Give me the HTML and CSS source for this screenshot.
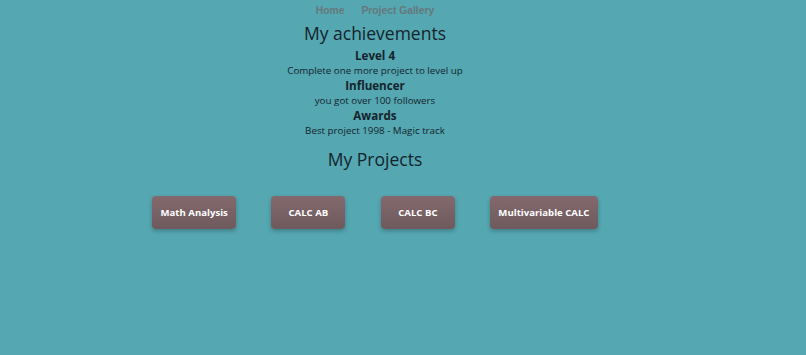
FILE: index.html
```html
<!DOCTYPE html>
<html>
<head>
<meta charset="utf-8">
<link rel="stylesheet" href="styles.css">
</head>
<body>
<div class="page">
  <nav class="nav">
    <a class="nav-link">Home</a>
    <a class="nav-link">Project Gallery</a>
  </nav>
  <h1 class="title">My achievements</h1>
  <div class="achievements">
    <div class="ach-name">Level 4</div>
    <div class="ach-desc">Complete one more project to level up</div>
    <div class="ach-name">Influencer</div>
    <div class="ach-desc">you got over 100 followers</div>
    <div class="ach-name">Awards</div>
    <div class="ach-desc">Best project 1998 - Magic track</div>
  </div>
  <h1 class="title projects-title">My Projects</h1>
  <div class="projects">
    <button class="proj">Math Analysis</button>
    <button class="proj">CALC AB</button>
    <button class="proj">CALC BC</button>
    <button class="proj">Multivariable CALC</button>
  </div>
</div>
</body>
</html>
```
FILE: styles.css
```css
html, body {
  margin: 0;
  padding: 0;
  background: #55a7b2;
  height: 100%;
}
body {
  font-family: "Open Sans", "Noto Sans", sans-serif;
  color: #14242c;
}
.page {
  width: 750px;
  display: flex;
  flex-direction: column;
  align-items: center;
}
.nav {
  display: flex;
  gap: 17px;
  padding-top: 5px;
  height: 15px;
}
.nav-link {
  font-family: "Liberation Sans", Arial, sans-serif;
  font-weight: bold;
  font-size: 10.3px;
  color: #66777c;
}
.title {
  font-weight: normal;
  font-size: 17.5px;
  margin: 0;
  line-height: 26px;
}
.achievements {
  display: flex;
  flex-direction: column;
  align-items: center;
  margin-top: 2px;
}
.ach-name {
  font-weight: bold;
  font-size: 11.6px;
  line-height: 15px;
}
.ach-desc {
  font-size: 9.8px;
  line-height: 15px;
}
.projects-title {
  margin-top: 8px;
}
.projects {
  display: flex;
  gap: 35.5px;
  margin-top: 24px;
}
.proj {
  height: 33px;
  min-width: 74px;
  padding: 0 8px;
  border: none;
  border-radius: 4px;
  background: linear-gradient(#83696d, #6e5a5d);
  box-shadow: 0 2px 4px rgba(0,0,0,0.25);
  color: #fff;
  font-family: "Open Sans", "Noto Sans", sans-serif;
  font-weight: bold;
  font-size: 9.6px;
}
```
